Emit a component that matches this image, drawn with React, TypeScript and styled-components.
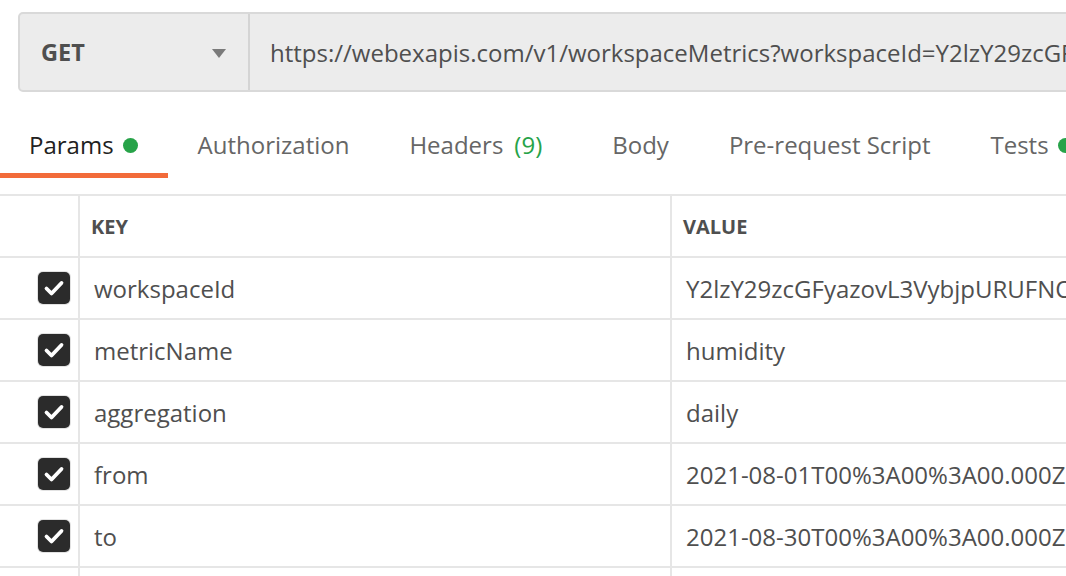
import React from 'react';
import styled, { createGlobalStyle } from 'styled-components';

const GlobalStyle = createGlobalStyle`
  html, body {
    margin: 0;
    padding: 0;
    background: #ffffff;
    font-family: "Open Sans", "Noto Sans", sans-serif;
    overflow: hidden;
  }
`;

const Page = styled.div`
  width: 1066px;
  height: 576px;
  overflow: hidden;
  background: #ffffff;
`;

const RequestBar = styled.div`
  display: flex;
  margin: 12px 0 0 18px;
  width: 1200px;
  height: 80px;
  box-sizing: border-box;
  border: 2px solid #d9d9d9;
  border-radius: 5px;
  background: #ececec;
`;

const MethodSelect = styled.div`
  display: flex;
  flex-shrink: 0;
  align-items: center;
  justify-content: space-between;
  width: 230px;
  box-sizing: border-box;
  padding: 0 22px 0 21px;
  border-right: 2px solid #d4d4d4;
  font-size: 23.5px;
  font-weight: 700;
  color: #4f4f4f;
`;

const Caret = styled.span`
  width: 0;
  height: 0;
  border-left: 7px solid transparent;
  border-right: 7px solid transparent;
  border-top: 9px solid #7a7a7a;
  margin-top: 2px;
`;

const UrlText = styled.div`
  display: flex;
  align-items: center;
  padding-left: 20px;
  font-size: 24px;
  color: #4f4f4f;
  white-space: nowrap;
`;

const Tabs = styled.div`
  display: flex;
  height: 102px;
  align-items: stretch;
  white-space: nowrap;
`;

const Tab = styled.div<{ $active?: boolean }>`
  display: flex;
  align-items: center;
  padding: 24px 30px 0 30px;
  font-size: 24px;
  color: ${({ $active }) => ($active ? '#212121' : '#666666')};
  border-bottom: 5px solid ${({ $active }) => ($active ? '#f26b3a' : 'transparent')};
  margin-bottom: 16px;
  &:first-child {
    padding-left: 29px;
  }
`;

const Dot = styled.span`
  display: inline-block;
  width: 15px;
  height: 15px;
  border-radius: 50%;
  background: #27a349;
  margin-left: 9px;
  margin-top: 2px;
`;

const Count = styled.span`
  color: #27a349;
  margin-left: 11px;
  margin-right: 10px;
`;

const Table = styled.div`
  width: 1200px;
  border-top: 2px solid #e6e6e6;
`;

const Row = styled.div`
  display: grid;
  grid-template-columns: 80px 592px 1fr;
  height: 62px;
  box-sizing: border-box;
  border-bottom: 2px solid #e6e6e6;
`;

const CheckCell = styled.div`
  display: flex;
  align-items: center;
  justify-content: flex-end;
  padding-right: 8px;
  border-right: 2px solid #e6e6e6;
`;

const HeadCell = styled.div<{ $last?: boolean }>`
  display: flex;
  align-items: center;
  padding-left: 11px;
  font-size: 20px;
  font-weight: 700;
  color: #4f4f4f;
  border-right: ${({ $last }) => ($last ? 'none' : '2px solid #e6e6e6')};
`;

const Cell = styled.div<{ $last?: boolean }>`
  display: flex;
  align-items: center;
  padding-left: 14px;
  font-size: 24px;
  color: #4f4f4f;
  white-space: nowrap;
  border-right: ${({ $last }) => ($last ? 'none' : '2px solid #e6e6e6')};
`;

const Box = styled.span`
  display: flex;
  align-items: center;
  justify-content: center;
  width: 32px;
  height: 32px;
  border-radius: 5px;
  background: #2b2b2b;
  box-shadow: 0 0 0 1px #e2e2e2;
`;

const Check = () => (
  <svg width="24" height="24" viewBox="0 0 24 24" fill="none">
    <polyline
      points="4.5,12.5 9.5,17.5 19.5,7"
      stroke="#ffffff"
      strokeWidth="3.8"
      strokeLinecap="round"
      strokeLinejoin="round"
    />
  </svg>
);

const params = [
  { key: 'workspaceId', value: 'Y2lzY29zcGFyazovL3VybjpURUFNOlVzLXdlc3QtMl9y' },
  { key: 'metricName', value: 'humidity' },
  { key: 'aggregation', value: 'daily' },
  { key: 'from', value: '2021-08-01T00%3A00%3A00.000Z' },
  { key: 'to', value: '2021-08-30T00%3A00%3A00.000Z' },
];

const App: React.FC = () => (
  <Page>
    <GlobalStyle />
    <RequestBar>
      <MethodSelect>
        GET
        <Caret />
      </MethodSelect>
      <UrlText>https://webexapis.com/v1/workspaceMetrics?workspaceId=Y2lzY29zcGFyazovL3VybjpURUFN</UrlText>
    </RequestBar>

    <Tabs>
      <Tab $active>
        Params
        <Dot />
      </Tab>
      <Tab>Authorization</Tab>
      <Tab>
        Headers
        <Count>(9)</Count>
      </Tab>
      <Tab>Body</Tab>
      <Tab>Pre-request Script</Tab>
      <Tab>
        Tests
        <Dot />
      </Tab>
    </Tabs>

    <Table>
      <Row>
        <CheckCell />
        <HeadCell>KEY</HeadCell>
        <HeadCell $last>VALUE</HeadCell>
      </Row>
      {params.map(p => (
        <Row key={p.key}>
          <CheckCell>
            <Box>
              <Check />
            </Box>
          </CheckCell>
          <Cell>{p.key}</Cell>
          <Cell $last>{p.value}</Cell>
        </Row>
      ))}
      <Row>
        <CheckCell />
        <Cell />
        <Cell $last />
      </Row>
    </Table>
  </Page>
);

export default App;
